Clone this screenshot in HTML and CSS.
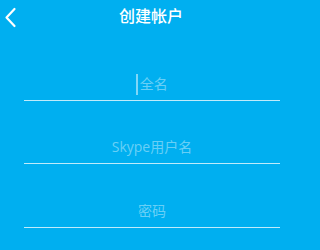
FILE: index.html
```html
<!DOCTYPE html>
<html lang="zh-CN">
<head>
<meta charset="utf-8">
<title>创建帐户</title>
<link rel="stylesheet" href="styles.css">
</head>
<body>
<div class="screen">
  <header class="topbar">
    <svg class="back" width="20" height="30" viewBox="0 0 20 30" aria-hidden="true">
      <polyline points="14.5,9 6.5,17.5 14.5,26" fill="none" stroke="#fff" stroke-width="2.2" stroke-linecap="round" stroke-linejoin="round"/>
    </svg>
    <h1 class="title">创建帐户</h1>
  </header>
  <main class="form">
    <div class="field"><span class="caret"></span><span class="ph">全名</span></div>
    <div class="field"><span class="ph">Skype用户名</span></div>
    <div class="field field-last"><span class="ph">密码</span></div>
  </main>
</div>
</body>
</html>
```

FILE: styles.css
```css
html, body {
  margin: 0;
  padding: 0;
  background: #00aff0;
}
.screen {
  width: 300px;
  height: 250px;
  background: #00aff0;
  font-family: "Noto Sans CJK SC", "Noto Sans", sans-serif;
  overflow: hidden;
}
.topbar {
  position: relative;
  height: 30px;
  display: flex;
  align-items: center;
  justify-content: center;
}
.back {
  position: absolute;
  left: 0;
  top: 0;
}
.title {
  margin: 0;
  color: #fff;
  font-size: 16px;
  font-weight: 500;
  line-height: 30px;
  padding-left: 2px;
}
.form {
  padding: 38px 20px 0 24px;
  display: flex;
  flex-direction: column;
  gap: 30px;
}
.field {
  height: 32px;
  border-bottom: 1px solid rgba(255, 255, 255, 0.75);
  display: flex;
  align-items: center;
  justify-content: center;
}
.field-last {
  margin-top: 1px;
}
.ph {
  font-family: "Open Sans", "Noto Sans CJK SC", sans-serif;
  font-size: 14px;
  line-height: 20px;
  color: rgba(255, 255, 255, 0.42);
}
.caret {
  display: inline-block;
  width: 1.5px;
  height: 21px;
  margin-right: 2px;
  background: rgba(255, 255, 255, 0.5);
}
```
